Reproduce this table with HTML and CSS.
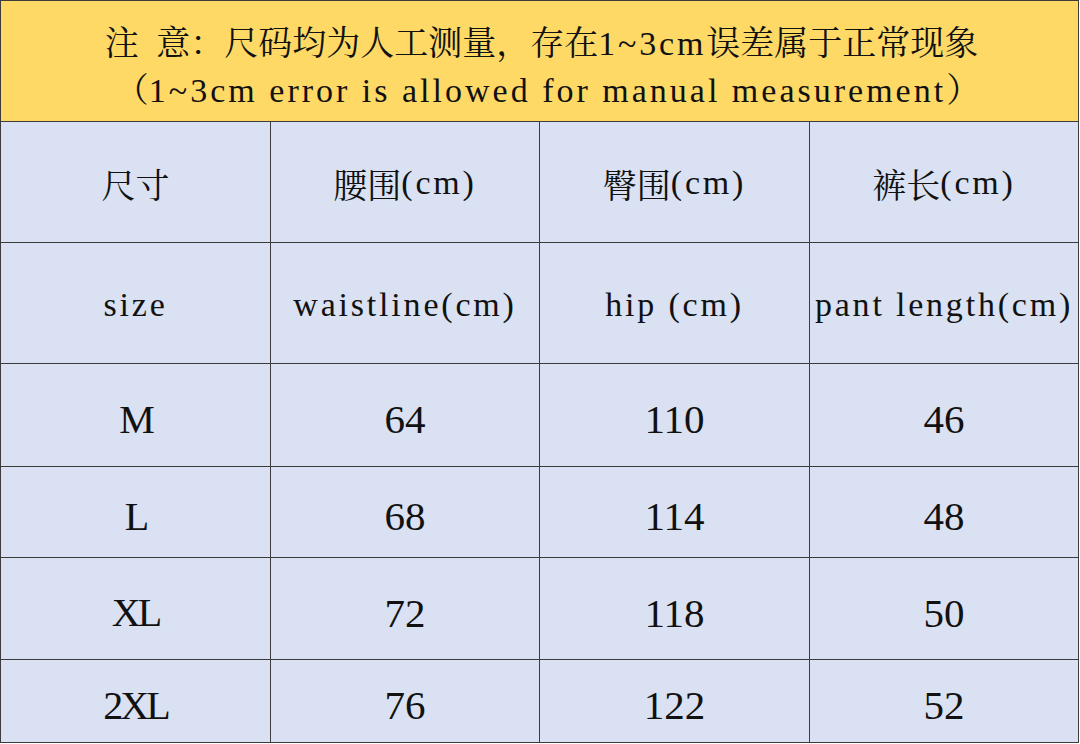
FILE: index.html
```html
<!DOCTYPE html>
<html lang="zh">
<head>
<meta charset="utf-8">
<title>尺码表</title>
<link rel="stylesheet" href="styles.css">
</head>
<body>
<div class="sheet">
  <div class="notice">
    <div class="line1"><span class="zh">注</span><span class="en gap">&nbsp;</span><span class="zh">意：尺码均为人工测量，存在</span><span class="en">1~3cm</span><span class="zh">误差属于正常现象</span></div>
    <div class="line2"><span class="zh">（</span><span class="en">1~3cm error is allowed for manual measurement</span><span class="zh">）</span></div>
  </div>
  <div class="grid">
    <div class="cell r1"><span class="zh">尺寸</span></div>
    <div class="cell r1"><span class="zh">腰围</span><span class="en">(cm)</span></div>
    <div class="cell r1"><span class="zh">臀围</span><span class="en">(cm)</span></div>
    <div class="cell r1"><span class="zh">裤长</span><span class="en">(cm)</span></div>

    <div class="cell r2"><span class="en">size</span></div>
    <div class="cell r2"><span class="en">waistline(cm)</span></div>
    <div class="cell r2"><span class="en">hip (cm)</span></div>
    <div class="cell r2"><span class="en">pant length(cm)</span></div>

    <div class="cell r3"><span class="sz">M</span></div>
    <div class="cell r3"><span class="num">64</span></div>
    <div class="cell r3"><span class="num">110</span></div>
    <div class="cell r3"><span class="num">46</span></div>

    <div class="cell r4"><span class="sz">L</span></div>
    <div class="cell r4"><span class="num">68</span></div>
    <div class="cell r4"><span class="num">114</span></div>
    <div class="cell r4"><span class="num">48</span></div>

    <div class="cell r5"><span class="sz">XL</span></div>
    <div class="cell r5"><span class="num">72</span></div>
    <div class="cell r5"><span class="num">118</span></div>
    <div class="cell r5"><span class="num">50</span></div>

    <div class="cell r6"><span class="sz">2XL</span></div>
    <div class="cell r6"><span class="num">76</span></div>
    <div class="cell r6"><span class="num">122</span></div>
    <div class="cell r6"><span class="num">52</span></div>
  </div>
</div>
</body>
</html>
```
FILE: styles.css
```css
html, body {
  margin: 0;
  padding: 0;
  background: #ffffff;
}

.sheet {
  width: 1079px;
  box-sizing: border-box;
  border-left: 1px solid #3c3c3c;
  border-top: 1px solid #3c3c3c;
  color: #111111;
}

.zh {
  font-family: "Noto Serif CJK SC", "Noto Sans CJK SC", serif;
  font-weight: 400;
}

.en {
  font-family: "Liberation Serif", "DejaVu Serif", serif;
  letter-spacing: 2.8px;
}

.en.gap {
  letter-spacing: 9px;
}

.notice {
  height: 121px;
  box-sizing: border-box;
  background: #ffd966;
  border-right: 1px solid #3c3c3c;
  border-bottom: 1px solid #3c3c3c;
  display: flex;
  flex-direction: column;
  align-items: center;
  justify-content: center;
  padding-top: 10px;
  font-size: 34px;
}

.line1, .line2 {
  line-height: 44px;
  white-space: nowrap;
}

.line1 {
  padding-left: 4px;
}

.line2 {
  padding-left: 16px;
}

.line2 .en {
  letter-spacing: 3px;
}

.grid {
  display: grid;
  grid-template-columns: 270px 269px 270px 269px;
  grid-template-rows: 121px 121px 103px 91px 102px 83px;
}

.cell {
  box-sizing: border-box;
  background: #d9e1f2;
  border-right: 1px solid #3c3c3c;
  border-bottom: 1px solid #3c3c3c;
  display: flex;
  align-items: center;
  justify-content: center;
  font-size: 34px;
  white-space: nowrap;
  padding-top: 2px;
}

.r2 {
  padding-top: 4px;
}

.r3, .r4, .r5, .r6 {
  padding-top: 8px;
}

.num {
  font-family: "Liberation Serif", "DejaVu Serif", serif;
  font-size: 41px;
}

.sz {
  font-family: "Liberation Serif", "DejaVu Serif", serif;
  font-size: 40px;
  letter-spacing: -3px;
}
```
